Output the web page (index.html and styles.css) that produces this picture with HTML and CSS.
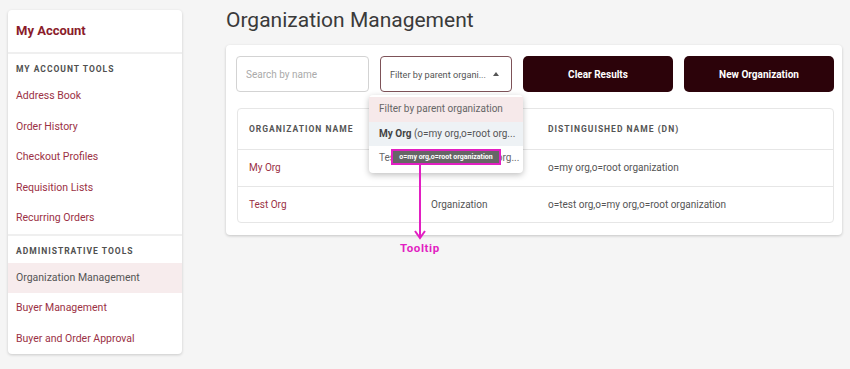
FILE: index.html
```html
<!DOCTYPE html>
<html lang="en">
<head>
  <meta charset="UTF-8" />
  <title>Organization Management</title>
  <link rel="stylesheet" href="styles.css">
</head>
<body>
  <div class="layout">
    <aside class="sidebar">
      <div class="sidebar-title">My Account</div>
      <div class="sidebar-section">
        <div class="section-label">My Account Tools</div>
        <a class="side-link" href="#">Address Book</a>
        <a class="side-link" href="#">Order History</a>
        <a class="side-link" href="#">Checkout Profiles</a>
        <a class="side-link" href="#">Requisition Lists</a>
        <a class="side-link" href="#">Recurring Orders</a>
      </div>
      <div class="sidebar-section">
        <div class="section-label">Administrative Tools</div>
        <a class="side-link active" href="#">Organization Management</a>
        <a class="side-link" href="#">Buyer Management</a>
        <a class="side-link" href="#">Buyer and Order Approval</a>
      </div>
    </aside>

    <main class="main">
      <h1>Organization Management</h1>
      <div class="panel">
        <div class="toolbar">
          <input class="search" type="text" placeholder="Search by name">
          <div class="select">
            <span class="select-text">Filter by parent organi...</span>
            <span class="caret"></span>
          </div>
          <button class="btn">Clear Results</button>
          <button class="btn">New Organization</button>
        </div>

        <table class="org-table">
          <thead>
            <tr>
              <th class="col-name">Organization Name</th>
              <th class="col-type">Type</th>
              <th>Distinguished Name (DN)</th>
            </tr>
          </thead>
          <tbody>
            <tr>
              <td class="org-link">My Org</td>
              <td>Organization</td>
              <td>o=my org,o=root organization</td>
            </tr>
            <tr>
              <td class="org-link">Test Org</td>
              <td>Organization</td>
              <td>o=test org,o=my org,o=root organization</td>
            </tr>
          </tbody>
        </table>

        <ul class="dropdown">
          <li class="opt first">Filter by parent organization</li>
          <li class="opt hover"><b>My Org</b> (o=my org,o=root org...</li>
          <li class="opt">Test Org (o=test org,o=my org...</li>
        </ul>
        <div class="tooltip">o=my org,o=root organization</div>
      </div>

      <svg class="callout-arrow" width="12" height="76" viewBox="0 0 12 76">
        <line x1="6" y1="0" x2="6" y2="72" stroke="#e21fc2" stroke-width="2"/>
        <polyline points="1,66 6,73 11,66" fill="none" stroke="#e21fc2" stroke-width="2"/>
      </svg>
      <div class="callout-label">Tooltip</div>
    </main>
  </div>
</body>
</html>
```

FILE: styles.css
```css
* {
  margin: 0;
  padding: 0;
  box-sizing: border-box;
  font-family: Roboto, 'Liberation Sans', sans-serif;
}
body {
  background: #f5f5f5;
  color: #444;
  width: 850px;
  height: 369px;
  overflow: hidden;
}
.layout {
  display: flex;
  padding: 0 8px;
}

/* sidebar */
.sidebar {
  width: 174px;
  margin-top: 10px;
  background: #fff;
  border-radius: 4px;
  box-shadow: 0 1px 3px rgba(0, 0, 0, 0.18);
  display: flex;
  flex-direction: column;
}
.sidebar-title {
  height: 42px;
  line-height: 42px;
  padding-left: 8px;
  font-size: 13px;
  font-weight: 700;
  color: #8a1c2b;
}
.sidebar-section {
  border-top: 2px solid #efefef;
  display: flex;
  flex-direction: column;
}
.section-label {
  padding: 9px 8px 6px;
  line-height: 12px;
  font-size: 8.5px;
  font-weight: 700;
  letter-spacing: 1px;
  text-transform: uppercase;
  color: #505050;
}
.side-link {
  height: 30.5px;
  line-height: 30.5px;
  padding-left: 8px;
  font-size: 10.5px;
  color: #9b3145;
  text-decoration: none;
}
.side-link.active {
  background: #f7eced;
  color: #555;
}

/* main */
.main {
  flex: 1;
  margin-left: 44px;
  position: relative;
}
.main h1 {
  margin: 7px 0 12px;
  line-height: 26px;
  font-size: 21px;
  font-weight: 400;
  color: #3a3a3a;
}
.panel {
  position: relative;
  background: #fff;
  border-radius: 4px;
  box-shadow: 0 1px 3px rgba(0, 0, 0, 0.2);
  padding: 11px 8px 12px 10px;
}
.toolbar {
  display: flex;
  gap: 11px;
  height: 36px;
  margin-bottom: 16px;
}
.search {
  width: 133px;
  border: 1px solid #d3d3d3;
  border-radius: 4px;
  padding: 0 9px;
  font-size: 10px;
  outline: none;
}
.search::placeholder {
  color: #aaa;
}
.select {
  width: 132px;
  border: 1px solid #7d5258;
  border-radius: 4px;
  padding: 0 9px;
  display: flex;
  align-items: center;
  justify-content: space-between;
  color: #555;
  white-space: nowrap;
}
.select-text {
  font-size: 9.2px;
}
.caret {
  width: 0;
  height: 0;
  border-left: 3.5px solid transparent;
  border-right: 3.5px solid transparent;
  border-bottom: 4px solid #555;
  margin-right: 3px;
}
.btn {
  width: 150px;
  border: none;
  border-radius: 5px;
  background: #2c030a;
  color: #fff;
  font-size: 10px;
  font-weight: 700;
}

/* table */
.org-table {
  width: 597px;
  margin-left: 1px;
  border-collapse: separate;
  border-spacing: 0;
  border: 1px solid #e6e6e6;
  border-radius: 4px;
}
.org-table th {
  height: 40px;
  text-align: left;
  padding-left: 11px;
  font-size: 8.5px;
  font-weight: 700;
  letter-spacing: 1px;
  text-transform: uppercase;
  color: #555;
}
.org-table td {
  height: 36.5px;
  padding-left: 11px;
  border-top: 1px solid #e6e6e6;
  font-size: 10px;
  color: #555;
}
.org-table .col-name {
  width: 182px;
}
.org-table .col-type {
  width: 117px;
}
.org-table td.org-link {
  color: #9b3145;
}

/* dropdown + tooltip */
.dropdown {
  position: absolute;
  left: 143px;
  top: 50px;
  width: 154px;
  list-style: none;
  background: #fff;
  border-radius: 4px;
  box-shadow: 0 2px 6px rgba(0, 0, 0, 0.25);
  padding: 2px 0 2px;
}
.opt {
  height: 24.5px;
  line-height: 24.5px;
  padding-left: 10px;
  font-size: 10px;
  color: #666;
  white-space: nowrap;
  overflow: hidden;
}
.opt.first {
  background: #f6e9ea;
}
.opt.hover {
  background: #eef2f5;
  color: #555;
}
.opt b {
  color: #444;
}
.tooltip {
  position: absolute;
  left: 165px;
  top: 104px;
  width: 110px;
  height: 16px;
  line-height: 12px;
  background: #666;
  border: 2px solid #e21fc2;
  color: #fff;
  font-size: 7px;
  font-weight: 700;
  text-align: center;
}

/* annotation */
.callout-arrow {
  position: absolute;
  left: 188px;
  top: 165px;
}
.callout-label {
  position: absolute;
  left: 174px;
  top: 241px;
  font-size: 11.5px;
  font-weight: 700;
  letter-spacing: 0.6px;
  color: #e21fc2;
}
```
